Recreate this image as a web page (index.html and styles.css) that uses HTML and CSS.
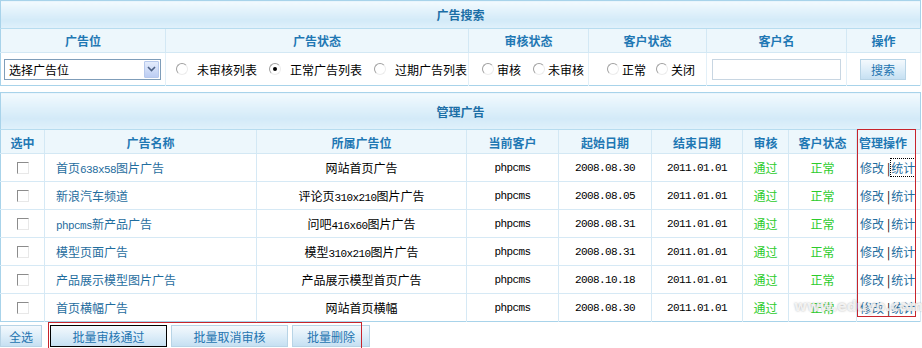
FILE: index.html
```html
<!DOCTYPE html>
<html lang="zh-CN">
<head>
<meta charset="utf-8">
<title>广告管理</title>
<link rel="stylesheet" href="styles.css">
</head>
<body>
<div class="page">
  <table class="tbl search">
    <colgroup>
      <col class="c1"><col class="c2"><col class="c3"><col class="c4"><col class="c5"><col class="c6">
    </colgroup>
    <tr class="title"><th colspan="6">广告搜索</th></tr>
    <tr class="head">
      <th>广告位</th><th>广告状态</th><th>审核状态</th><th>客户状态</th><th>客户名</th><th>操作</th>
    </tr>
    <tr class="srow">
      <td>
        <div class="select"><span class="sel-text">选择广告位</span><span class="sel-btn"><svg width="9" height="6" viewBox="0 0 9 6"><path d="M1 1 L4.5 4.5 L8 1" fill="none" stroke="#4d6185" stroke-width="1.6"/></svg></span></div>
      </td>
      <td>
        <div class="radios r-status">
          <span class="ritem"><span class="radio"></span>未审核列表</span>
          <span class="ritem"><span class="radio on"></span>正常广告列表</span>
          <span class="ritem"><span class="radio"></span>过期广告列表</span>
        </div>
      </td>
      <td>
        <div class="radios r-audit">
          <span class="ritem tight"><span class="radio"></span>审核</span>
          <span class="ritem tight"><span class="radio"></span>未审核</span>
        </div>
      </td>
      <td>
        <div class="radios r-client">
          <span class="ritem tight"><span class="radio"></span>正常</span>
          <span class="ritem tight"><span class="radio"></span>关闭</span>
        </div>
      </td>
      <td><div class="textbox"></div></td>
      <td><span class="btn small">搜索</span></td>
    </tr>
  </table>

  <div class="manage-wrap">
    <table class="tbl manage">
      <colgroup>
        <col class="m1"><col class="m2"><col class="m3"><col class="m4"><col class="m5"><col class="m6"><col class="m7"><col class="m8"><col class="m9">
      </colgroup>
      <tr class="title tall"><th colspan="9">管理广告</th></tr>
      <tr class="head">
        <th>选中</th><th>广告名称</th><th>所属广告位</th><th>当前客户</th><th>起始日期</th><th>结束日期</th><th>审核</th><th>客户状态</th><th class="left">管理操作</th>
      </tr>
      <tr class="row">
        <td><span class="check"></span></td>
        <td class="name">首页<span class="lat">638x58</span>图片广告</td>
        <td>网站首页广告</td>
        <td class="lat">phpcms</td>
        <td class="lat">2008.08.30</td>
        <td class="lat">2011.01.01</td>
        <td class="ok">通过</td>
        <td class="ok">正常</td>
        <td class="ops"><span>修改</span><span class="bar">|</span><span class="focus">统计</span></td>
      </tr>
      <tr class="row">
        <td><span class="check"></span></td>
        <td class="name">新浪汽车频道</td>
        <td>评论页<span class="lat">310x210</span>图片广告</td>
        <td class="lat">phpcms</td>
        <td class="lat">2008.08.05</td>
        <td class="lat">2011.01.01</td>
        <td class="ok">通过</td>
        <td class="ok">正常</td>
        <td class="ops"><span>修改</span><span class="bar">|</span><span>统计</span></td>
      </tr>
      <tr class="row">
        <td><span class="check"></span></td>
        <td class="name"><span class="lat">phpcms</span>新产品广告</td>
        <td>问吧<span class="lat">416x60</span>图片广告</td>
        <td class="lat">phpcms</td>
        <td class="lat">2008.08.31</td>
        <td class="lat">2011.01.01</td>
        <td class="ok">通过</td>
        <td class="ok">正常</td>
        <td class="ops"><span>修改</span><span class="bar">|</span><span>统计</span></td>
      </tr>
      <tr class="row">
        <td><span class="check"></span></td>
        <td class="name">模型页面广告</td>
        <td>模型<span class="lat">310x210</span>图片广告</td>
        <td class="lat">phpcms</td>
        <td class="lat">2008.08.31</td>
        <td class="lat">2011.01.01</td>
        <td class="ok">通过</td>
        <td class="ok">正常</td>
        <td class="ops"><span>修改</span><span class="bar">|</span><span>统计</span></td>
      </tr>
      <tr class="row">
        <td><span class="check"></span></td>
        <td class="name">产品展示模型图片广告</td>
        <td>产品展示模型首页广告</td>
        <td class="lat">phpcms</td>
        <td class="lat">2008.10.18</td>
        <td class="lat">2011.01.01</td>
        <td class="ok">通过</td>
        <td class="ok">正常</td>
        <td class="ops"><span>修改</span><span class="bar">|</span><span>统计</span></td>
      </tr>
      <tr class="row">
        <td><span class="check"></span></td>
        <td class="name">首页横幅广告</td>
        <td>网站首页横幅</td>
        <td class="lat">phpcms</td>
        <td class="lat">2008.08.30</td>
        <td class="lat">2011.01.01</td>
        <td class="ok">通过</td>
        <td class="ok">正常</td>
        <td class="ops"><span>修改</span><span class="bar">|</span><span>统计</span></td>
      </tr>
    </table>
    <div class="redbox ops-box"></div>
    <div class="watermark">www.eduyo.com</div>
  </div>

  <div class="actions">
    <span class="btn b-all">全选</span>
    <span class="btn b-pass focused">批量审核通过</span>
    <span class="btn b-cancel">批量取消审核</span>
    <span class="btn b-del">批量删除</span>
    <div class="redbox btn-box"></div>
  </div>
</div>
</body>
</html>
```

FILE: styles.css
```css
* { box-sizing: border-box; }
html, body { margin: 0; padding: 0; background: #fff; }
body {
  font-family: "Noto Sans CJK SC", "Liberation Sans", sans-serif;
  font-size: 12px;
  color: #000;
  width: 922px;
  height: 348px;
  overflow: hidden;
}
.page { width: 920px; position: relative; }

.lat {
  font-family: "Liberation Mono", "DejaVu Sans Mono", monospace;
  font-size: 11px;
  letter-spacing: -0.6px;
}

.tbl {
  width: 920px;
  border-collapse: collapse;
  table-layout: fixed;
  border: 1px solid #a8d3ea;
}
.tbl th, .tbl td {
  padding: 0;
  text-align: center;
  vertical-align: middle;
  white-space: nowrap;
  overflow: hidden;
  font-weight: normal;
}

.title th {
  height: 28px;
  background: linear-gradient(#f3fafe 0%, #e2f2fb 35%, #d3eaf8 70%, #e0f1fb 100%);
  color: #1b6ea6;
  font-weight: bold;
  border-bottom: 1px solid #b7dcef;
}
.title.tall th { height: 37px; padding-top: 1px; }

.head th {
  height: 24px;
  background: #edf7fc;
  color: #1f78b4;
  font-weight: bold;
  border-right: 1px solid #d3e8f4;
  border-bottom: 1px solid #d3e8f4;
}
.manage .head th { padding-top: 2px; }
.head th.left { text-align: left; padding-left: 2px; }

/* search table */
.c1 { width: 165px; } .c2 { width: 303px; } .c3 { width: 120px; }
.c4 { width: 118px; } .c5 { width: 140px; } .c6 { width: 74px; }

.srow td {
  height: 33px;
  border-right: 1px solid #e3f0f8;
  text-align: left;
}
.select {
  margin-left: 3px;
  width: 157px;
  height: 21px;
  border: 1px solid #7f9db9;
  display: flex;
  align-items: center;
  justify-content: space-between;
  padding: 0 1px 0 4px;
  background: #fff;
}
.sel-btn {
  width: 15px;
  height: 17px;
  border: 1px solid #b7c9ec;
  background: linear-gradient(#e4ecfc, #bccdf3);
  display: flex;
  align-items: center;
  justify-content: center;
  border-radius: 1px;
}
.radios { display: flex; align-items: center; }
.r-status { padding-left: 10px; gap: 12px; }
.r-audit { padding-left: 13px; gap: 12px; }
.r-client { padding-left: 18px; gap: 10px; }
.ritem { display: inline-flex; align-items: center; gap: 9px; }
.ritem.tight { gap: 3px; }
.radio {
  display: inline-block;
  width: 12px;
  height: 12px;
  border-radius: 50%;
  border: 1px solid;
  border-color: #a0a0a0 #ececec #ececec #a0a0a0;
  background: #fff;
  position: relative;
}
.radio.on::after {
  content: "";
  position: absolute;
  left: 3px; top: 3px;
  width: 4px; height: 4px;
  border-radius: 50%;
  background: #000;
}
.textbox {
  margin-left: 5px;
  width: 129px;
  height: 21px;
  border: 1px solid #c8d6e2;
  background: #fff;
}
.btn {
  display: inline-flex;
  align-items: center;
  justify-content: center;
  height: 21px;
  color: #2474b0;
  border: 1px solid #b8d4e6;
  background: linear-gradient(#f4f9fd, #dbecf8 55%, #c6e0f2);
}
.btn.small { width: 46px; margin-left: 13px; }

/* manage table */
.manage-wrap { position: relative; margin-top: 6px; }
.m1 { width: 44px; } .m2 { width: 212px; } .m3 { width: 210px; }
.m4 { width: 92px; } .m5 { width: 93px; } .m6 { width: 91px; }
.m7 { width: 46px; } .m8 { width: 68px; } .m9 { width: 64px; }

.row td {
  height: 28px;
  border-right: 1px solid #d6e9f5;
  border-bottom: 1px solid #d6e9f5;
  background: #fff;
}
.row:last-child td { border-bottom: none; }
.row td.name { text-align: left; padding-left: 11px; color: #1f6d9e; }
.row td.ok { color: #2ccc2c; }
.row td.ops { text-align: left; padding-left: 3px; color: #1f6d9e; }
.bar { color: #000; margin: 0 1px 0 3px; }
.focus { outline: 1px dotted #000; outline-offset: 0; }
.check {
  display: inline-block;
  width: 12px;
  height: 12px;
  border: 1px solid;
  border-color: #8c8c8c #e8e8e8 #e8e8e8 #8c8c8c;
  background: #fff;
  vertical-align: middle;
  position: relative;
  top: -2px;
}

.redbox { position: absolute; border: 1px solid #c8242c; pointer-events: none; }
.ops-box { left: 857px; top: 37px; width: 59px; height: 188px; }
.watermark {
  position: absolute;
  left: 794px; top: 206px;
  font-family: "DejaVu Sans", sans-serif;
  font-size: 14px;
  font-weight: bold;
  color: rgba(255,255,255,0.8);
  text-shadow: 0 0 2px rgba(120,120,120,0.6);
}

.actions {
  position: relative;
  display: flex;
  gap: 4px;
  margin-top: 3px;
}
.actions .btn { height: 22px; }
.b-all { width: 42px; }
.b-pass { width: 117px; margin-left: 4px; }
.b-cancel { width: 117px; }
.b-del { width: 78px; }
.btn.focused { border-color: #000; }
.btn-box { left: 48px; top: -3px; width: 314px; height: 30px; }
```
